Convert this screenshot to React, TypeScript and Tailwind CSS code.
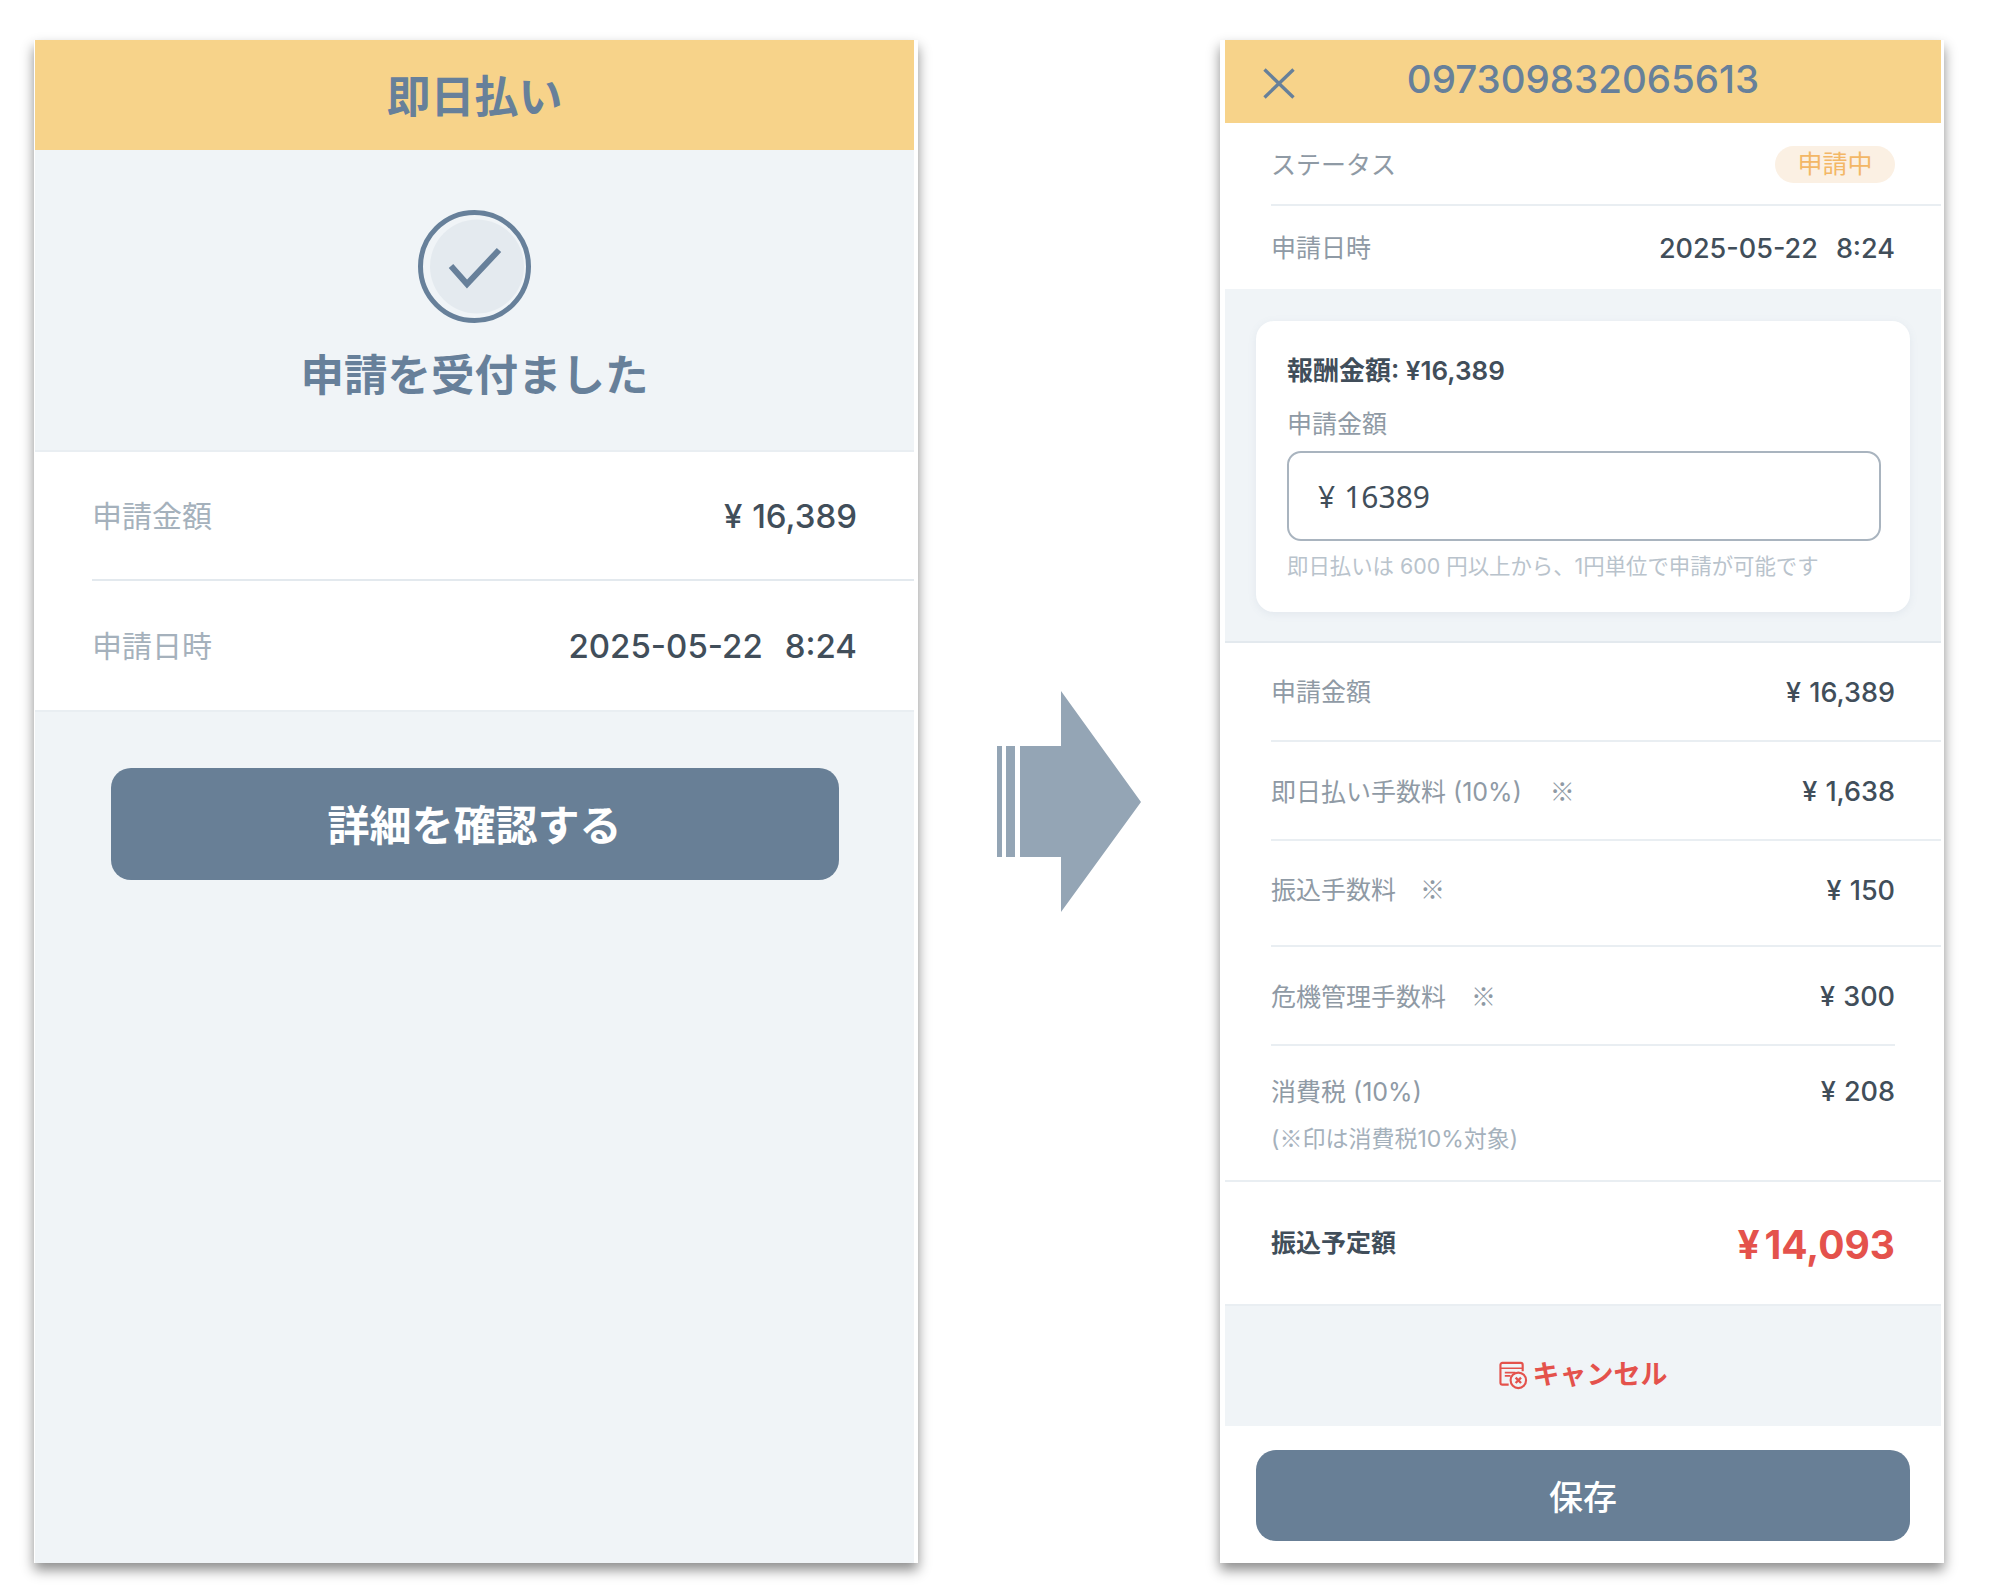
const font = { fontFamily: 'Inter, "Noto Sans CJK JP", sans-serif' }
const cjk = { fontFamily: '"Noto Sans CJK JP", sans-serif' }

function Money({ children }: { children: string }) {
  return (
    <span>
      <span className="mr-[0.3em]">¥</span>
      {children}
    </span>
  )
}

function CancelIcon() {
  return (
    <svg width="29" height="29" viewBox="0 0 30 29" fill="none" stroke="#e4524c" strokeWidth="2.2">
      <path d="M10 24H3.5a2 2 0 0 1-2-2V3.5a2 2 0 0 1 2-2h19a2 2 0 0 1 2 2V10" />
      <path d="M1.5 7h23M6 11.5h11M6 15h6" strokeWidth="1.8" />
      <circle cx="20" cy="19.5" r="8" />
      <path d="M17.2 16.7l5.6 5.6M22.8 16.7l-5.6 5.6" strokeWidth="2.4" />
    </svg>
  )
}

function ArrowGraphic() {
  return (
    <svg width="144" height="221" viewBox="0 0 144 221" className="mx-[79px] shrink-0">
      <path
        d="M0 55h5v111H0zM9 55h9v111H9zM23 55h41V0l80 111-80 110v-55H23z"
        fill="#94a5b5"
      />
    </svg>
  )
}

function ReceivedPanel() {
  return (
    <div className="w-[884px] h-[1523px] shrink-0 bg-white pl-px pr-[4px] shadow-[0_7px_12px_rgba(0,0,0,0.45)]">
      <div className="flex h-full flex-col bg-[#f0f4f7]">
        <div className="flex h-[110px] items-center justify-center bg-[#f7d38a] pt-[3px] text-[44px] font-bold text-[#67809a]">
          即日払い
        </div>
        <div className="flex h-[300px] flex-col items-center pt-[60px]">
          <svg width="113" height="113" viewBox="0 0 113 113" fill="none">
            <circle cx="56.5" cy="56.5" r="54" fill="#f0f4f7" stroke="#67809a" strokeWidth="5" />
            <circle cx="59" cy="56.5" r="47" fill="#e4eaef" />
            <path d="M33 56l16 18 32-34" stroke="#67809a" strokeWidth="6" />
          </svg>
          <div className="mt-[22px] text-[43.5px] leading-[60px] font-bold text-[#67809a]">申請を受付ました</div>
        </div>
        <div className="border-y-2 border-[#e9eef2] bg-white">
          <div className="ml-[57px] flex h-[129px] items-center justify-between border-b-2 border-[#e3e9ee] pt-[2px] pr-[57px]">
            <span className="text-[30px] text-[#a5b1bc]">申請金額</span>
            <span className="text-[33px] font-medium text-[#414e5a]">
              <Money>16,389</Money>
            </span>
          </div>
          <div className="ml-[57px] flex h-[129px] items-center justify-between pt-[2px] pr-[57px]">
            <span className="text-[30px] text-[#a5b1bc]">申請日時</span>
            <span className="text-[33px] font-medium text-[#414e5a]">
              2025-05-22<span className="ml-[22px]">8:24</span>
            </span>
          </div>
        </div>
        <button className="mx-auto mt-[56px] h-[112px] w-[728px] rounded-[20px] bg-[#687f96] pt-[3px] text-[42px] font-bold text-white">
          詳細を確認する
        </button>
      </div>
    </div>
  )
}

const feeRows = [
  { label: '申請金額', value: '16,389', height: 'h-[99px] pt-[2px]', short: false, mark: '' },
  { label: '即日払い手数料 (10%)', value: '1,638', height: 'h-[99px] pt-[2px]', short: false, mark: 'ml-[28px]' },
  { label: '振込手数料', value: '150', height: 'h-[106px] pb-[6px]', short: false, mark: 'ml-[24px]' },
  { label: '危機管理手数料', value: '300', height: 'h-[99px] pt-[2px]', short: true, mark: 'ml-[25px]' },
]

function DetailPanel() {
  return (
    <div className="w-[724px] h-[1523px] shrink-0 bg-white pl-[5px] pr-[3px] shadow-[0_7px_12px_rgba(0,0,0,0.45)]">
      <div className="flex h-full flex-col">
        <div className="relative flex h-[83px] items-start justify-center bg-[#f7d38a] pt-[15px]">
          <svg width="32" height="31" viewBox="0 0 32 31" className="absolute top-[28px] left-[38px]" stroke="#67809a" strokeWidth="3.4" fill="none">
            <path d="M1.5 1.5l29 28M30.5 1.5l-29 28" />
          </svg>
          <span className="text-[38.5px] leading-[48px] font-medium text-[#67809a]">097309832065613</span>
        </div>

        <div className="ml-[46px] flex h-[83px] items-center justify-between border-b-2 border-[#e9eef2] pt-[2px] pr-[46px]">
          <span className="pt-[2px] text-[25px] text-[#8f9aa5]">ステータス</span>
          <span className="flex h-[37px] w-[120px] items-center justify-center rounded-full bg-[#fbf0e3] text-[25px] text-[#f3b766]">申請中</span>
        </div>
        <div className="ml-[46px] flex h-[83px] items-center justify-between pt-[2px] pr-[46px]">
          <span className="text-[25px] text-[#8f9aa5]">申請日時</span>
          <span className="pt-[2px] text-[27px] font-medium text-[#414e5a]">
            2025-05-22<span className="ml-[18px]">8:24</span>
          </span>
        </div>

        <div className="h-[354px] border-b-2 border-[#e3e9ee] bg-[#f0f4f7] px-[31px] pt-[32px]">
          <div className="h-[291px] rounded-[18px] bg-white pt-[32px] pr-[29px] pl-[31px] shadow-[0_2px_8px_rgba(103,128,154,0.1)]">
            <div className="text-[26px] leading-[36px] font-semibold text-[#414e5a]">報酬金額: ¥16,389</div>
            <div className="mt-[18px] text-[25px] leading-[34px] text-[#8f9aa5]">申請金額</div>
            <div className="mt-[10px] flex h-[90px] items-center rounded-[14px] border-2 border-[#a9b4bf] pl-[29px] text-[30px] text-[#414e5a]" style={{ fontFamily: '"Noto Sans", sans-serif' }}>
              ¥<span className="ml-[9px]">16389</span>
            </div>
            <div className="mt-[10px] text-[21.4px] leading-[30px] whitespace-nowrap text-[#b9c3cc]">即日払いは 600 円以上から、1円単位で申請が可能です</div>
          </div>
        </div>

        {feeRows.map((row) => (
          <div
            key={row.label}
            className={`ml-[46px] flex items-center justify-between border-b-2 border-[#e9eef2] ${row.height} ${row.short ? 'mr-[46px] pr-0' : 'pr-[46px]'}`}
          >
            <span className="text-[25px] text-[#8f9aa5]">
              {row.label}
              {row.mark && <span className={row.mark} style={cjk}>※</span>}
            </span>
            <span className="pt-[2px] text-[27px] font-medium text-[#414e5a]">
              <Money>{row.value}</Money>
            </span>
          </div>
        ))}

        <div className="h-[136px] border-b-2 border-[#e9eef2] pt-[28px] pr-[46px] pl-[46px]">
          <div className="flex items-center justify-between">
            <span className="text-[25px] leading-[36px] text-[#8f9aa5]">消費税 (10%)</span>
            <span className="text-[27px] leading-[36px] font-medium text-[#414e5a]">
              <Money>208</Money>
            </span>
          </div>
          <div className="mt-[11px] text-[23px] leading-[32px] text-[#a5b1bc]">
            (<span style={cjk}>※</span>印は消費税10%対象)
          </div>
        </div>

        <div className="flex h-[122px] items-center justify-between pt-[2px] pr-[46px] pl-[46px]">
          <span className="text-[25px] font-semibold text-[#414e5a]">振込予定額</span>
          <span className="pt-[2px] text-[39px] font-bold text-[#e4524c]">
            <span className="mr-[0.12em]">¥</span>14,093
          </span>
        </div>

        <div className="flex h-[122px] items-center justify-center gap-[5px] border-t-2 border-[#e9eef2] bg-[#f0f4f7] pt-[18px] text-[27px] font-semibold text-[#e4524c]">
          <CancelIcon />
          キャンセル
        </div>

        <div className="px-[31px] pt-[24px]">
          <button className="h-[91px] w-full rounded-[20px] bg-[#687f96] pt-[3px] text-[34px] font-medium text-white">保存</button>
        </div>
      </div>
    </div>
  )
}

export default function App() {
  return (
    <div className="h-[1588px] w-[2012px] overflow-hidden bg-white pt-[40px] pl-[34px]" style={font}>
      <div className="flex h-[1523px] items-center">
        <ReceivedPanel />
        <ArrowGraphic />
        <DetailPanel />
      </div>
    </div>
  )
}
